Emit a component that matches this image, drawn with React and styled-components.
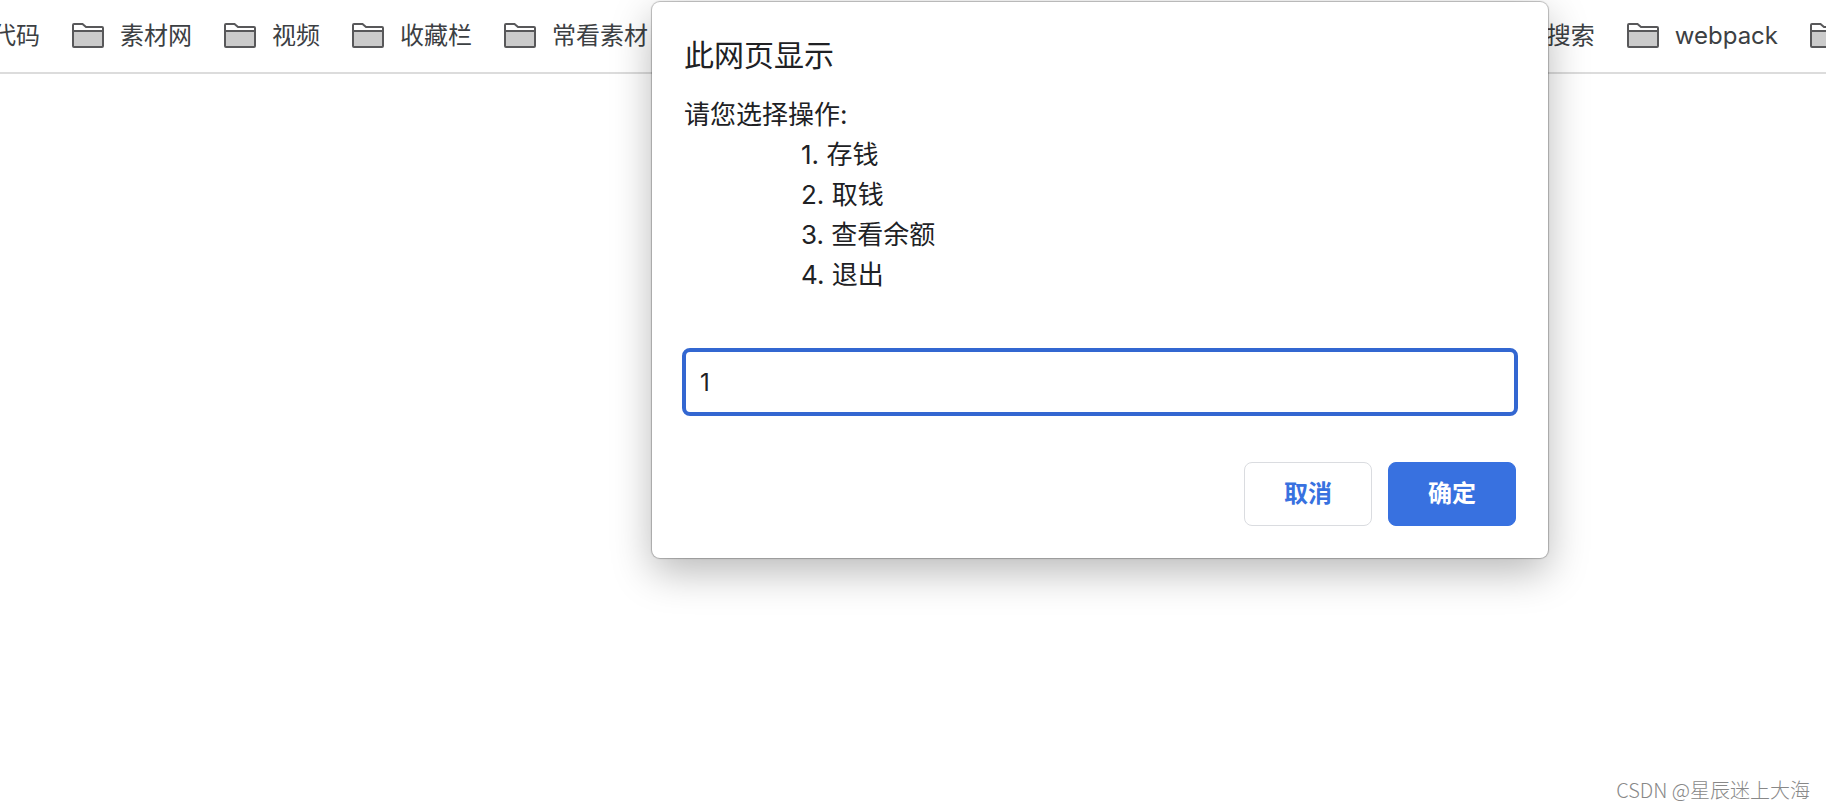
import React, { useState } from "react";
import styled, { createGlobalStyle, css } from 'styled-components'

const GlobalStyle = createGlobalStyle`
* {
box-sizing: border-box;
}
body {
margin: 0;
background: #fff;
color: #202124;
font-family: Inter, "Noto Sans CJK SC", sans-serif;
}
`

const Page = styled.div`
min-height: 100vh;
display: grid;
grid-template-rows: auto 1fr;
overflow: hidden;
`

const BookmarkBar = styled.nav`
display: flex;
justify-content: space-between;
padding: 18px 0;
border-bottom: 2px solid #dcdcdc;
overflow: hidden;
`

const BookmarkGroup = styled.div`
display: flex;
flex-shrink: 0;
gap: 32px;
margin: ${({ $side }) => ($side === 'left' ? '0 0 0 -8px' : '0 -16px 0 0')};
`

const Bookmark = styled.a`
display: flex;
align-items: center;
gap: 16px;
color: #3c4043;
font-size: 24px;
line-height: 36px;
white-space: nowrap;
text-decoration: none;
`

const Content = styled.main`
display: flex;
align-items: flex-end;
justify-content: flex-end;
padding: 0 16px 6px;
`

const Watermark = styled.span`
color: #888;
font-family: "Noto Sans CJK SC", sans-serif;
font-size: 20px;
font-weight: 300;
line-height: 28px;
`

// the prompt hangs from the top of the window, over the bookmarks
const Overlay = styled.div`
position: absolute;
top: 2px;
left: 0;
right: 0;
display: flex;
justify-content: center;
padding-left: 374px;
`

const Dialog = styled.form`
width: 896px;
padding: 32px;
background: #fff;
border-radius: 8px;
box-shadow: 0 0 1px 1px rgba(0, 0, 0, 0.25), 0 14px 40px rgba(0, 0, 0, 0.28);
`

const Title = styled.h1`
margin: 0 0 19px;
font-size: 30px;
font-weight: 400;
line-height: 42px;
`

const Message = styled.label`
display: block;
margin-bottom: 13px;
font-size: 26px;
line-height: 40px;
white-space: pre-wrap;
`

const PromptInput = styled.input`
display: block;
width: calc(100% + 4px);
height: 68px;
margin: 0 -2px 46px;
padding: 0 14px;
border: 4px solid #3367d1;
border-radius: 8px;
outline: none;
background: #fff;
color: #202124;
font-family: inherit;
font-size: 24px;
`

const Actions = styled.div`
display: flex;
justify-content: flex-end;
gap: 16px;
`

const Button = styled.button`
width: 128px;
height: 64px;
padding: 0 0 6px;
border: 1px solid #dadce0;
border-radius: 8px;
background: #fff;
color: #3871e0;
font-family: inherit;
font-size: 24px;
font-weight: 700;
${({ $primary }) => $primary && css`
border-color: #3871e0;
background: #3871e0;
color: #fff;
`}
`

const leftBookmarks = ['素材网', '视频', '收藏栏', '常看素材']

const message = `请您选择操作:
                1. 存钱
                2. 取钱
                3. 查看余额
                4. 退出
                `

const FolderIcon = () => (
  <svg width="32" height="26" viewBox="0 0 32 26" fill="none" aria-hidden="true">
    <path d="M1 8h30v16H1z" fill="#cbcbcb" />
    <path d="M1 8V2Q1 1 2 1H10.500l3.500 3H30Q31 4 31 5v18q0 1-1 1H2Q1 24 1 23V8h30" stroke="#58585a" strokeWidth="2" />
  </svg>
)

function App() {
  const [value, setValue] = useState('1')

  return (
    <Page>
      <GlobalStyle />
      <BookmarkBar>
        <BookmarkGroup $side="left">
          <Bookmark href="#">代码</Bookmark>
          {leftBookmarks.map(name => (
            <Bookmark key={name} href="#"><FolderIcon />{name}</Bookmark>
          ))}
        </BookmarkGroup>
        <BookmarkGroup $side="right">
          <Bookmark href="#">搜索</Bookmark>
          <Bookmark href="#"><FolderIcon />webpack</Bookmark>
          <Bookmark href="#" aria-label="folder"><FolderIcon /></Bookmark>
        </BookmarkGroup>
      </BookmarkBar>
      <Content>
        <Watermark>CSDN @星辰迷上大海</Watermark>
      </Content>
      <Overlay>
        <Dialog role="dialog" aria-labelledby="title" onSubmit={e => e.preventDefault()}>
          <Title id="title">此网页显示</Title>
          <Message htmlFor="answer">{message}</Message>
          <PromptInput id="answer" type="text" value={value} onChange={e => setValue(e.target.value)} />
          <Actions>
            <Button type="button">取消</Button>
            <Button type="submit" $primary>确定</Button>
          </Actions>
        </Dialog>
      </Overlay>
    </Page>
  );
}

export default App;
